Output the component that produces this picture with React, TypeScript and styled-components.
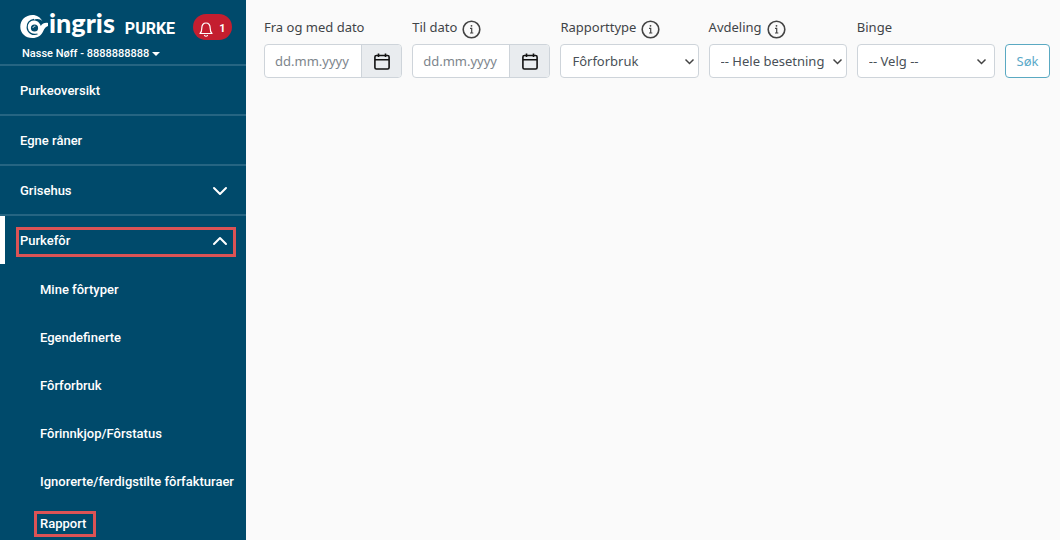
import React from "react";
import styled, { createGlobalStyle } from "styled-components";

const GlobalStyle = createGlobalStyle`
  *, *::before, *::after { box-sizing: border-box; }
  body {
    margin: 0;
    background: #fafafa;
    color: #3f4448;
    font: 13px/20px "Noto Sans", "Open Sans", sans-serif;
  }
  button, input, select { font: inherit; margin: 0; }
`;

const Page = styled.div`
  display: flex;
  min-height: 100vh;
`;

const Sidebar = styled.aside`
  flex: none;
  width: 246px;
  background: #004a6b;
  color: #fff;
  font: 500 13px/18px Roboto, sans-serif;
`;

const Header = styled.header`
  display: flex;
  flex-direction: column;
  height: 64px;
  padding: 9px 14px 0 20px;
`;

const Brand = styled.div`
  display: flex;
  align-items: center;
  height: 36px;
`;

const HomeLink = styled.a`
  display: flex;
  align-items: center;
  color: #fff;
  text-decoration: none;
`;

const LogoText = styled.span`
  margin-left: 1px;
  padding-bottom: 8px;
  font: 900 27px/30px Lato, sans-serif;
`;

const Product = styled.span`
  margin-left: 10px;
  padding-top: 4px;
  font: 700 16px/24px Roboto, sans-serif;
`;

const Alerts = styled.button`
  display: flex;
  align-items: center;
  justify-content: center;
  gap: 6px;
  width: 39px;
  height: 26px;
  margin-left: auto;
  padding: 4px 0 0;
  border: 0;
  border-radius: 13px;
  background: #c41e2f;
  color: #fff;
  font: 700 11px/14px Roboto, sans-serif;
`;

const Account = styled.button`
  display: flex;
  align-items: center;
  align-self: flex-start;
  gap: 3px;
  padding: 0 2px;
  border: 0;
  background: none;
  color: #fff;
  font: 500 11px/18px Roboto, sans-serif;
`;

const Menu = styled.ul`
  margin: 0;
  padding: 0;
  list-style: none;
`;

const MenuItem = styled.li`
  border-top: 2px solid #266582;
`;

const MenuLink = styled.a<{ $active?: boolean }>`
  display: flex;
  align-items: center;
  height: 48px;
  padding: 4px 10px 0 ${(p) => (p.$active ? "11px" : "16px")};
  border-left: ${(p) => (p.$active ? "5px solid #fff" : "0")};
  color: #fff;
  text-decoration: none;
`;

const MenuLabel = styled.span<{ $marked?: boolean }>`
  display: flex;
  flex: 1;
  align-items: center;
  justify-content: space-between;
  height: 30px;
  padding: 0 5px 2px 1px;
  border: 3px solid ${(p) => (p.$marked ? "#dc5355" : "transparent")};
`;

const SubLink = styled.a`
  display: flex;
  align-items: center;
  height: 48px;
  padding: 4px 0 0 40px;
  color: #fff;
  white-space: nowrap;
  text-decoration: none;
`;

const MarkedSubLink = styled.a`
  display: block;
  width: fit-content;
  margin: 7px 0 2px 34px;
  padding: 1px 7px 1px 3px;
  border: 3px solid #dc5355;
  color: #fff;
  text-decoration: none;
`;

const Main = styled.main`
  flex: 1;
  min-width: 0;
  padding: 17px 10px 0 18px;
`;

const Filters = styled.form`
  display: flex;
  align-items: flex-end;
  gap: 10px;
`;

const Field = styled.div`
  flex: 1;
  min-width: 0;
`;

const LabelRow = styled.div`
  display: flex;
  gap: 5px;
  height: 27px;
  white-space: nowrap;
`;

const InfoButton = styled.button`
  display: flex;
  align-items: center;
  height: 24px;
  padding: 0;
  border: 0;
  background: none;
  color: #444;
`;

const DateGroup = styled.div`
  display: flex;
  height: 34px;
  overflow: hidden;
  border: 1px solid #ced4da;
  border-radius: 4px;
  background: #fff;
`;

const DateInput = styled.input`
  flex: 1;
  min-width: 0;
  padding: 0 0 0 10px;
  border: 0;
  background: none;
  color: #495057;
  &::placeholder { color: #7d858c; opacity: 1; }
`;

const CalendarButton = styled.button`
  display: flex;
  align-items: center;
  justify-content: center;
  width: 40px;
  padding: 0;
  border: 0;
  border-left: 1px solid #ced4da;
  background: #e9ecef;
  color: #111;
`;

const SelectWrap = styled.div`
  position: relative;
`;

const Select = styled.select`
  display: block;
  appearance: none;
  width: 100%;
  height: 34px;
  padding: 0 22px 0 11px;
  border: 1px solid #ced4da;
  border-radius: 4px;
  background: #fff;
  color: #495057;
`;

const SelectArrow = styled.svg<{ $inset: number }>`
  position: absolute;
  top: 13px;
  right: ${(p) => p.$inset}px;
  pointer-events: none;
`;

const SearchButton = styled.button`
  flex: none;
  width: 45px;
  height: 34px;
  padding: 0;
  border: 1px solid #5aa9c2;
  border-radius: 4px;
  background: #fff;
  color: #5aa9c8;
`;

const LogoMark = () => (
  <svg width="28" height="26" viewBox="0 0 28 26" fill="none" aria-hidden="true">
    <path
      d="M22.500 7.500C20.500 3.200 16.800 1 12.500 1C5.500 1 0.300 6 0.300 12.800C0.300 19.500 5.500 24 12.300 24C17.500 24 21.500 21.500 23.300 17C24.300 14.300 26 12.600 28 12V9C25 8.400 22.300 9.500 20.800 12C19.800 8.500 17 6.300 13.200 6.200C16.500 4.300 20.500 5 22.500 7.500Z"
      fill="#fff"
    />
    <path d="M14 5.500C9.500 6 6.800 9.500 7.200 13.700C7.700 18.800 12.500 21.500 17.500 20" stroke="#004a6b" strokeWidth="1.300" />
    <circle cx="14.500" cy="14" r="3.600" fill="#004a6b" />
    <path d="M13 14C13.200 12.700 14.200 12 15.300 12.200" stroke="#fff" strokeWidth="0.900" />
  </svg>
);

const BellIcon = () => (
  <svg width="14" height="15" viewBox="0 0 14 15" fill="none" stroke="#fff" strokeWidth="1.200" strokeLinecap="round" strokeLinejoin="round" aria-hidden="true">
    <path d="M1 11.500C2.300 10.300 2.800 9 2.800 6.200C2.800 3 4.500 1 7 1S11.200 3 11.200 6.200C11.200 9 11.700 10.300 13 11.500ZM5.500 13.500C6.200 14.500 7.800 14.500 8.500 13.500" />
  </svg>
);

const InfoIcon = () => (
  <svg width="19" height="19" viewBox="0 0 19 19" fill="none" aria-hidden="true">
    <circle cx="9.500" cy="9.500" r="8.300" stroke="currentColor" strokeWidth="1.600" />
    <path d="M8 8.300H9.700V13M8 13H11.300" stroke="currentColor" strokeWidth="1.200" />
    <circle cx="9.500" cy="5.800" r="0.900" fill="currentColor" />
  </svg>
);

const CalendarIcon = () => (
  <svg width="16" height="17" viewBox="0 0 16 17" fill="none" stroke="currentColor" strokeWidth="1.600" aria-hidden="true">
    <rect x="0.900" y="2.500" width="14.200" height="13.500" rx="1.500" />
    <path d="M1 6.700H15M4.500 0.500V4M11.500 0.500V4" />
  </svg>
);

const MenuChevron = ({ up }: { up?: boolean }) => (
  <svg width="16" height="10" viewBox="0 0 16 10" fill="none" stroke="#fff" strokeWidth="2" strokeLinecap="round" strokeLinejoin="round" aria-hidden="true">
    <path d={up ? "M2 8L8 2L14 8" : "M2 2L8 8L14 2"} />
  </svg>
);

const Info = ({ about }: { about: string }) => (
  <InfoButton type="button" aria-label={about}>
    <InfoIcon />
  </InfoButton>
);

type FieldProps = { id: string; label: string; info?: boolean };

const DateField = ({ id, label, info }: FieldProps) => (
  <Field>
    <LabelRow>
      <label htmlFor={id}>{label}</label>
      {info && <Info about={label} />}
    </LabelRow>
    <DateGroup>
      <DateInput id={id} type="text" placeholder="dd.mm.yyyy" />
      <CalendarButton type="button" aria-label={label}>
        <CalendarIcon />
      </CalendarButton>
    </DateGroup>
  </Field>
);

const SelectField = ({ id, label, info, value, inset = 4 }: FieldProps & { value: string; inset?: number }) => (
  <Field>
    <LabelRow>
      <label htmlFor={id}>{label}</label>
      {info && <Info about={label} />}
    </LabelRow>
    <SelectWrap>
      <Select id={id}>
        <option>{value}</option>
      </Select>
      <SelectArrow $inset={inset} width="11" height="9" viewBox="0 0 11 9" fill="none" stroke="#444" strokeWidth="1.500" aria-hidden="true">
        <path d="M1.500 2.500L5.500 6.500L9.500 2.500" />
      </SelectArrow>
    </SelectWrap>
  </Field>
);

const feedLinks = ["Mine fôrtyper", "Egendefinerte", "Fôrforbruk", "Fôrinnkjop/Fôrstatus", "Ignorerte/ferdigstilte fôrfakturaer"];

export default function App() {
  return (
    <>
      <GlobalStyle />
      <Page>
        <Sidebar>
          <Header>
            <Brand>
              <HomeLink href="#">
                <LogoMark />
                <LogoText>ingris</LogoText>
                <Product>PURKE</Product>
              </HomeLink>
              <Alerts type="button">
                <BellIcon />
                1
              </Alerts>
            </Brand>
            <Account type="button">
              Nasse Nøff - 8888888888
              <svg width="8" height="4" viewBox="0 0 8 4" aria-hidden="true">
                <path d="M0 0H8L4 4Z" fill="#fff" />
              </svg>
            </Account>
          </Header>
          <nav>
            <Menu>
              <MenuItem>
                <MenuLink href="#"><MenuLabel>Purkeoversikt</MenuLabel></MenuLink>
              </MenuItem>
              <MenuItem>
                <MenuLink href="#"><MenuLabel>Egne råner</MenuLabel></MenuLink>
              </MenuItem>
              <MenuItem>
                <MenuLink href="#"><MenuLabel>Grisehus<MenuChevron /></MenuLabel></MenuLink>
              </MenuItem>
              <MenuItem>
                <MenuLink href="#" $active><MenuLabel $marked>Purkefôr<MenuChevron up /></MenuLabel></MenuLink>
                <Menu>
                  {feedLinks.map((text) => (
                    <li key={text}><SubLink href="#">{text}</SubLink></li>
                  ))}
                  <li><MarkedSubLink href="#">Rapport</MarkedSubLink></li>
                </Menu>
              </MenuItem>
            </Menu>
          </nav>
        </Sidebar>
        <Main>
          <Filters>
            <DateField id="from" label="Fra og med dato" />
            <DateField id="to" label="Til dato" info />
            <SelectField id="type" label="Rapporttype" info value="Fôrforbruk" />
            <SelectField id="section" label="Avdeling" info value="-- Hele besetningen --" />
            <SelectField id="pen" label="Binge" value="-- Velg --" inset={8} />
            <SearchButton type="button">Søk</SearchButton>
          </Filters>
        </Main>
      </Page>
    </>
  );
}
